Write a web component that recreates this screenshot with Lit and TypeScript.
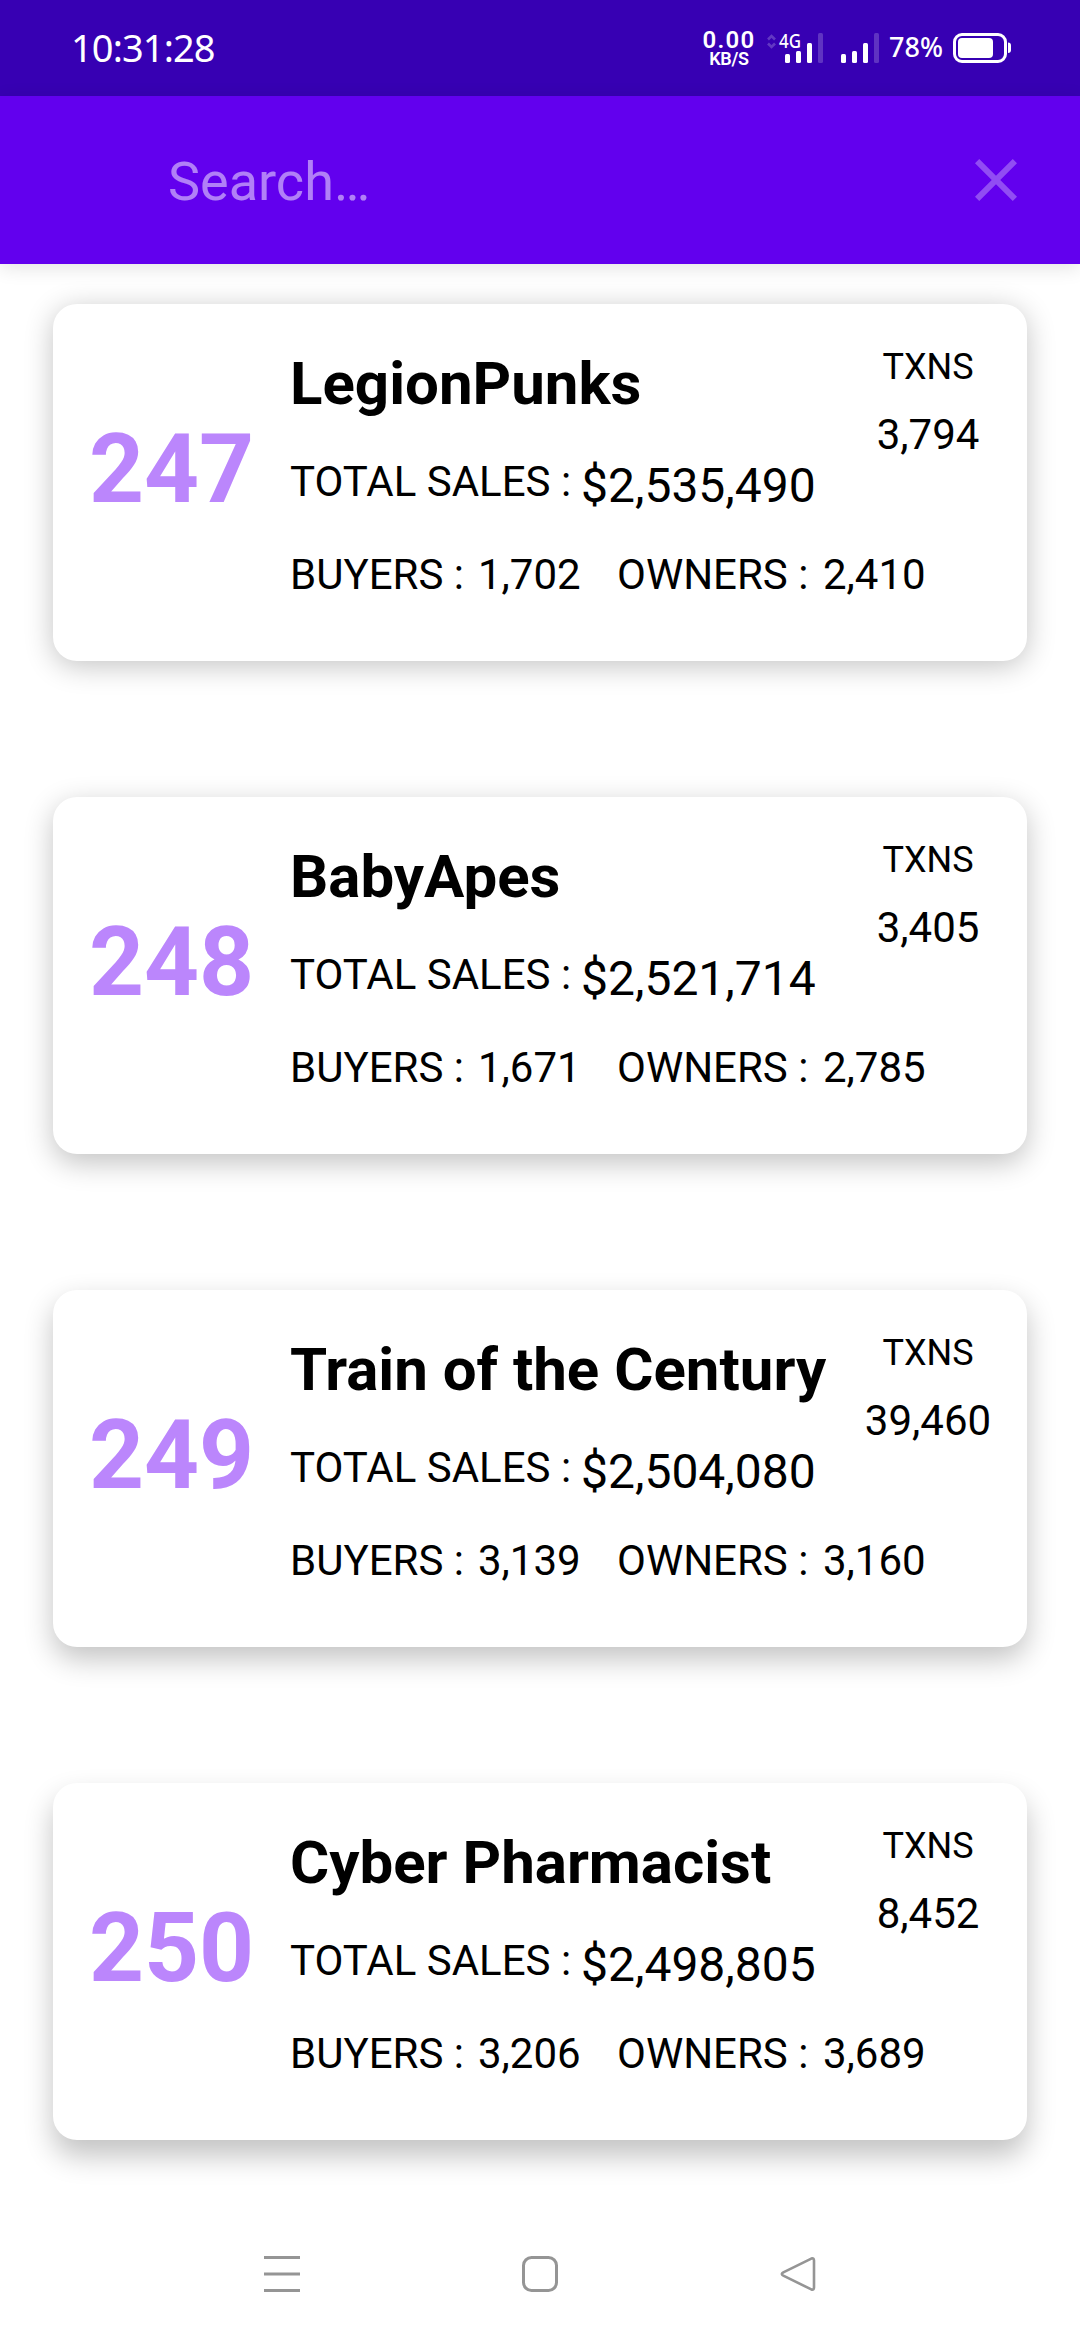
import { LitElement, html, css, svg } from "lit";
import { customElement, property } from "lit/decorators.js";

interface Collection {
  rank: number;
  name: string;
  sales: string;
  buyers: string;
  owners: string;
  txns: string;
}

const COLLECTIONS: Collection[] = [
  { rank: 247, name: "LegionPunks", sales: "$2,535,490", buyers: "1,702", owners: "2,410", txns: "3,794" },
  { rank: 248, name: "BabyApes", sales: "$2,521,714", buyers: "1,671", owners: "2,785", txns: "3,405" },
  { rank: 249, name: "Train of the Century", sales: "$2,504,080", buyers: "3,139", owners: "3,160", txns: "39,460" },
  { rank: 250, name: "Cyber Pharmacist", sales: "$2,498,805", buyers: "3,206", owners: "3,689", txns: "8,452" },
];

@customElement("status-bar")
class StatusBar extends LitElement {
  static styles = css`
    :host {
      display: flex;
      align-items: flex-start;
      box-sizing: border-box;
      height: 96px;
      padding: 0 68px 0 71px;
      background: #3700b3;
      color: #fff;
      font-family: "Noto Sans", sans-serif;
      white-space: nowrap;
    }
    .time { flex: 1; font-size: 38px; line-height: 94px; letter-spacing: -0.9px; }
    .speed { width: 56px; margin-right: 9px; padding-top: 26px; text-align: center; font-family: Roboto, sans-serif; font-weight: 600; }
    .rate { font-size: 24px; line-height: 28px; letter-spacing: 1.2px; }
    .unit { font-size: 18px; line-height: 9px; letter-spacing: -0.3px; }
    .signal { display: block; width: 114px; height: 96px; }
    .net { font-size: 20px; font-weight: 500; font-family: "Noto Sans", sans-serif; }
    .percent { width: 72px; padding-left: 9px; box-sizing: border-box; font-size: 27px; font-weight: 500; line-height: 94px; }
    .battery { display: block; width: 60px; height: 96px; }
  `;

  private bars(x: number) {
    return svg`
      <rect x=${x} y="54" width="5" height="9" rx="1.5"></rect>
      <rect x=${x + 11} y="51" width="5" height="12" rx="1.5"></rect>
      <rect x=${x + 22} y="43" width="5" height="20" rx="1.5"></rect>
      <rect x=${x + 33} y="33" width="5" height="30" rx="1.5" opacity="0.2"></rect>
    `;
  }

  render() {
    return html`
      <div class="time">10:31:28</div>
      <div class="speed">
        <div class="rate">0.00</div>
        <div class="unit">KB/S</div>
      </div>
      <svg class="signal" viewBox="766 0 114 96" fill="#fff">
        <path d="M768 39.5l3.5-3.5 3.5 3.5M768 43.5l3.5 3.5 3.5-3.5" fill="none" stroke="#fff" stroke-width="2.6" opacity="0.22"></path>
        <text class="net" x="779" y="48" textLength="22" lengthAdjust="spacingAndGlyphs">4G</text>
        ${this.bars(785)} ${this.bars(841)}
      </svg>
      <div class="percent">78%</div>
      <svg class="battery" viewBox="952 0 60 96">
        <rect x="954.5" y="34.5" width="51" height="27" rx="7.5" fill="none" stroke="#fff" stroke-width="3"></rect>
        <rect x="958" y="38" width="35" height="20" rx="4" fill="#fff"></rect>
        <path d="M1008 42.500a3 3 0 0 1 3 3v4.500a3 3 0 0 1-3 3z" fill="#fff"></path>
      </svg>
    `;
  }
}

@customElement("search-bar")
class SearchBar extends LitElement {
  static styles = css`
    :host {
      position: relative;
      z-index: 1;
      display: flex;
      align-items: center;
      box-sizing: border-box;
      height: 168px;
      padding: 0 48px 0 168px;
      background: #6200ee;
      box-shadow: 0 4px 18px rgba(0, 0, 0, 0.11);
    }
    .hint { flex: 1; padding-top: 4px; color: rgba(255, 255, 255, 0.5); font-size: 54px; line-height: 64px; }
    .clear { display: block; width: 72px; height: 72px; fill: #fff; opacity: 0.3; }
  `;

  render() {
    return html`
      <div class="hint">Search…</div>
      <svg class="clear" viewBox="0 0 24 24">
        <path d="M19 6.410L17.590 5 12 10.590 6.410 5 5 6.410 10.590 12 5 17.590 6.410 19 12 13.410 17.590 19 19 17.590 13.410 12z"></path>
      </svg>
    `;
  }
}

@customElement("collection-card")
class CollectionCard extends LitElement {
  @property({ attribute: false }) item!: Collection;
  @property({ type: Number }) depth = 0;

  static styles = css`
    :host { display: block; }
    .card {
      display: flex;
      align-items: flex-start;
      box-sizing: border-box;
      height: 357px;
      border-radius: 24px;
      background: #fff;
      color: #000;
      white-space: nowrap;
    }
    .rank { width: 237px; padding-top: 109px; text-align: center; color: #bb86fc; font-size: 96px; font-weight: 700; line-height: 112px; }
    .info { flex: 1; padding-top: 45px; }
    .name { font-size: 60px; font-weight: 700; line-height: 70px; }
    .sales { display: flex; align-items: flex-start; margin-top: 38px; }
    .label, .count { font-size: 42px; line-height: 49px; }
    .label { width: 291px; }
    .amount { padding-top: 1px; font-size: 48px; line-height: 56px; }
    .people { display: flex; margin-top: 36px; }
    .buyers-label { width: 188px; }
    .buyers { width: 139px; }
    .owners-label { width: 206px; }
    .txns { width: 198px; padding-top: 42px; text-align: center; margin-left: -198px; }
    .txns-label { margin-bottom: 22px; font-size: 36px; line-height: 42px; }
  `;

  render() {
    const c = this.item;
    return html`
      <div class="card" style="box-shadow:0 ${this.depth}px 29px rgba(0,0,0,0.24)">
        <div class="rank">${c.rank}</div>
        <div class="info">
          <div class="name">${c.name}</div>
          <div class="sales">
            <div class="label">TOTAL SALES :</div>
            <div class="amount">${c.sales}</div>
          </div>
          <div class="people">
            <div class="count buyers-label">BUYERS :</div>
            <div class="count buyers">${c.buyers}</div>
            <div class="count owners-label">OWNERS :</div>
            <div class="count">${c.owners}</div>
          </div>
        </div>
        <div class="txns">
          <div class="txns-label">TXNS</div>
          <div class="count">${c.txns}</div>
        </div>
      </div>
    `;
  }
}

@customElement("nav-bar")
class NavBar extends LitElement {
  static styles = css`
    :host { display: flex; justify-content: space-between; padding: 0 262px; }
    .icon { display: block; width: 40px; height: 40px; fill: none; stroke: #959595; stroke-width: 3; stroke-linejoin: round; }
  `;

  render() {
    return html`
      <svg class="icon" viewBox="0 0 40 40"><path d="M2 3.500h36M2 20h36M2 36.500h36"></path></svg>
      <svg class="icon" viewBox="0 0 40 40"><rect x="3.500" y="3.500" width="33" height="33" rx="8"></rect></svg>
      <svg class="icon" viewBox="0 0 40 40">
        <path d="M33.300 4.600L5.300 18.300Q2.300 20 5.300 21.700L33.300 35.400Q36 36.300 36 33.500V6.500Q36 3.700 33.300 4.600z" stroke-width="2.600"></path>
      </svg>
    `;
  }
}

@customElement("app-root")
class AppRoot extends LitElement {
  static styles = css`
    :host {
      display: flex;
      flex-direction: column;
      box-sizing: border-box;
      width: 1080px;
      height: 2340px;
      overflow: hidden;
      background: #fff;
      font-family: Roboto, sans-serif;
    }
    .list { display: flex; flex-direction: column; gap: 136px; padding: 40px 53px 0; }
    .nav { margin-top: 114px; }
  `;

  render() {
    return html`
      <status-bar></status-bar>
      <search-bar></search-bar>
      <div class="list">
        ${COLLECTIONS.map((item, i) => html`<collection-card .item=${item} .depth=${5 + i * 3.5}></collection-card>`)}
      </div>
      <nav-bar class="nav"></nav-bar>
    `;
  }
}
